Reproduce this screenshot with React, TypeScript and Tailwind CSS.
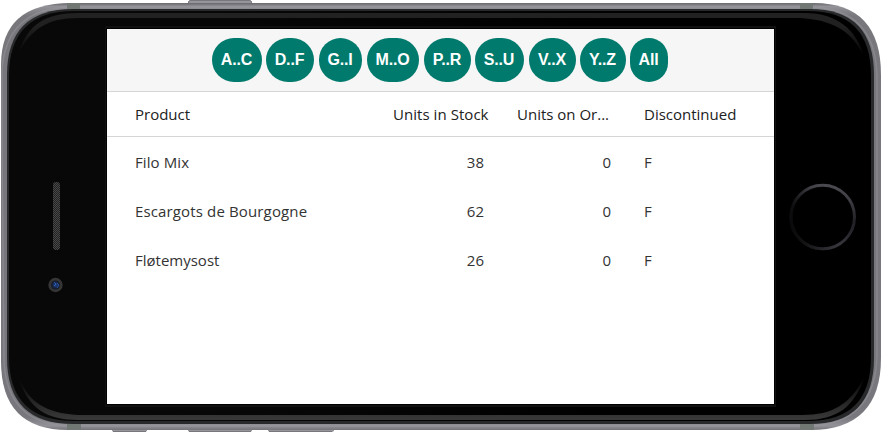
const filters = [
  { label: "A..C", size: "w-[50px] mr-1" },
  { label: "D..F", size: "w-[48px] mr-[5px]" },
  { label: "G..I", size: "w-[43px] mr-[5px]" },
  { label: "M..O", size: "w-[52px] mr-[5px]" },
  { label: "P..R", size: "w-[47px] mr-1" },
  { label: "S..U", size: "w-[49px] mr-[5px]" },
  { label: "V..X", size: "w-[47px] mr-1" },
  { label: "Y..Z", size: "w-[46px] mr-1" },
  { label: "All", size: "w-[38px]" },
];

const products = [
  { name: "Filo Mix", spacing: "tracking-[0.1px]", stock: 38, order: 0, discontinued: "F" },
  { name: "Escargots de Bourgogne", spacing: "tracking-[0.14px]", stock: 62, order: 0, discontinued: "F" },
  { name: "Fløtemysost", spacing: "tracking-[0px]", stock: 26, order: 0, discontinued: "F" },
];

function PhoneBody() {
  return (
    <svg className="absolute inset-0" width="882" height="433" viewBox="0 0 882 433" aria-hidden="true">
      <defs>
        <linearGradient id="metal" x1="0" y1="0" x2="0" y2="1">
          <stop offset="0" stopColor="#66666b" />
          <stop offset="0.008" stopColor="#929298" />
          <stop offset="0.03" stopColor="#77777c" />
          <stop offset="0.97" stopColor="#77777d" />
          <stop offset="0.99" stopColor="#929298" />
          <stop offset="1" stopColor="#737378" />
        </linearGradient>
        <linearGradient id="glass" x1="0" y1="0" x2="1" y2="0">
          <stop offset="0" stopColor="#080808" />
          <stop offset="0.25" stopColor="#070707" />
          <stop offset="0.7" stopColor="#000" />
        </linearGradient>
        <linearGradient id="shineTop" gradientUnits="userSpaceOnUse" x1="0" y1="13" x2="0" y2="54">
          <stop offset="0" stopColor="#222" />
          <stop offset="0.35" stopColor="#202020" />
          <stop offset="1" stopColor="#080808" />
        </linearGradient>
        <linearGradient id="shineBottom" gradientUnits="userSpaceOnUse" x1="0" y1="420" x2="0" y2="378">
          <stop offset="0" stopColor="#393939" />
          <stop offset="0.35" stopColor="#292929" />
          <stop offset="1" stopColor="#080808" />
        </linearGradient>
        <linearGradient id="home" x1="0.6" y1="0" x2="0.35" y2="1">
          <stop offset="0" stopColor="#4a4a50" />
          <stop offset="0.45" stopColor="#202025" />
          <stop offset="0.65" stopColor="#27272d" />
          <stop offset="1" stopColor="#43434a" />
        </linearGradient>
        <linearGradient id="homeShade" x1="0" y1="0.65" x2="0.5" y2="0.4">
          <stop offset="0" stopColor="#000" stopOpacity="0.8" />
          <stop offset="1" stopColor="#000" stopOpacity="0" />
        </linearGradient>
        <radialGradient id="lens">
          <stop offset="0" stopColor="#214b97" />
          <stop offset="0.5" stopColor="#182b55" />
          <stop offset="1" stopColor="#13161d" />
        </radialGradient>
        <pattern id="mesh" width="2" height="2" patternUnits="userSpaceOnUse">
          <rect width="2" height="2" fill="#222" />
          <rect width="1" height="1" fill="#484848" />
          <rect x="1" y="1" width="1" height="1" fill="#484848" />
        </pattern>
      </defs>

      <g fill="#95959b">
        <path d="M188 4V2l2-2h60l2 2v2z" />
        <path d="M112 428v3l2 1h31l2-1v-3z" />
        <path d="M188 428v3l2 1h60l2-1v-3z" />
        <path d="M268 428v3l2 1h62l2-1v-3z" />
      </g>
      <g stroke="#77777c" fill="none">
        <path d="M188.5 3V1.500l1.500-1h60l1.500 1V3M113 431.500h33M189 431.500h62M269 431.500h63" />
      </g>
      <path d="M1 170V65Q1 3 71 3H814Q881 3 881 75V358Q881 430 810 430H68Q1 430 1 361z" fill="url(#metal)" />
      <path d="M2 145V69Q7 8 71 7H811Q875 9 877 75V356Q875 424 810 426H69Q7 424 4 361z" fill="none" stroke="#98989e" strokeOpacity="0.5" strokeWidth="1.5" />
      <path d="M67 3h13v6H67zM800 3h13v6h-13zM67 424h14v6H67zM800 424h14v6h-14z" fill="#717873" />
      <path d="M7 75Q7 9 73 9H810Q874 9 874 75V358Q874 424 810 424H73Q7 424 7 358z" fill="#28292b" />
      <path d="M9 76Q9 11 74 11H808Q871 11 871 76V357Q871 421 808 421H74Q9 421 9 357z" fill="url(#glass)" />
      <path d="M19 52C28 24 46 13 78 13H805C837 13 856 30 863 54C850 30 832 20 800 18H78C47 18 32 29 19 52z" fill="url(#shineTop)" />
      <path d="M19 378C28 409 48 420 78 420H805C837 420 854 407 864 378C850 404 833 415 802 415H78C45 413 29 402 19 378z" fill="url(#shineBottom)" />
      <rect x="105" y="26" width="671" height="381" fill="#111" />
      <rect x="106" y="28" width="669" height="377" fill="#000" />
      <rect x="53" y="182" width="7" height="68" rx="3" fill="url(#mesh)" />
      <circle cx="55.500" cy="285" r="7.200" fill="#353535" />
      <circle cx="55.500" cy="285" r="4.500" fill="url(#lens)" />
      <path d="m54 282 2 2-2 2m3-3 2 2-2 3" fill="none" stroke="#346dd0" strokeOpacity="0.65" />
      <circle cx="822.700" cy="217" r="31.800" fill="none" stroke="url(#home)" strokeWidth="3" />
      <circle cx="822.700" cy="217" r="31.800" fill="none" stroke="url(#homeShade)" strokeWidth="3.500" />
    </svg>
  );
}

export default function App() {
  return (
    <main className="relative h-[433px] w-[882px] overflow-hidden bg-white pl-[107px] pt-[29px]">
      <PhoneBody />
      <section className="relative h-[375px] w-[667px] bg-white font-['Open_Sans','Noto_Sans',sans-serif] text-[15px] text-[#333]">
        <nav className="flex h-[63px] border-b border-[#d5d5d5] bg-[#f6f6f6] pl-[105px] pt-[9px]">
          {filters.map((filter) => (
            <button
              key={filter.label}
              className={`${filter.size} flex h-11 shrink-0 items-center justify-center rounded-[22px] bg-[#007a6c] pr-px font-['Liberation_Sans',Arial,sans-serif] text-base font-bold tracking-[-0.15px] text-white`}
            >
              {filter.label}
            </button>
          ))}
        </nav>
        <div className="grid h-[45px] grid-cols-[258px_124px_127px_1fr] items-center border-b border-[#d5d5d5] pl-7 text-[#212121]">
          <span>Product</span>
          <span className="tracking-[0.05px]">Units in Stock</span>
          <span>Units on Or...</span>
          <span>Discontinued</span>
        </div>
        <div className="pt-px">
          {products.map((product) => (
            <div key={product.name} className="grid h-[49px] grid-cols-[258px_91px_127px_33px_1fr] items-center pl-7">
              <span className={product.spacing}>{product.name}</span>
              <span className="text-right">{product.stock}</span>
              <span className="text-right">{product.order}</span>
              <span />
              <span>{product.discontinued}</span>
            </div>
          ))}
        </div>
      </section>
    </main>
  );
}
